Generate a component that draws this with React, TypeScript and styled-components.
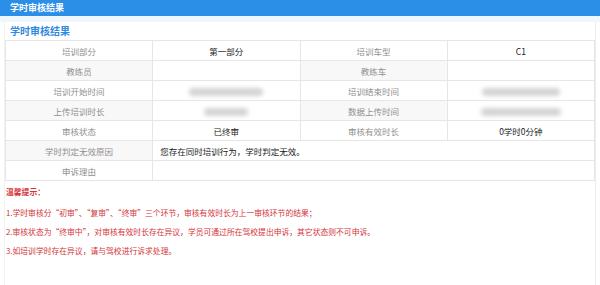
import React from "react";
import styled, { createGlobalStyle } from "styled-components";

const GlobalStyle = createGlobalStyle`
    html, body {
        margin: 0;
        padding: 0;
        background: #ffffff;
        font-family: "Noto Sans CJK SC", "Noto Sans", sans-serif;
    }
`;

const Page = styled.div`
    width: 600px;
    height: 285px;
    overflow: hidden;
    background: #fff;
`;

const TopBar = styled.div`
    height: 16px;
    background: #2b8fe8;
    color: #fff;
    font-size: 9px;
    font-weight: 700;
    line-height: 16px;
    padding-left: 10px;
`;

const Band = styled.div`
    height: 6px;
    background: #eef7fd;
`;

const Panel = styled.div`
    margin: 0 4px;
    border-right: 1px solid #ececec;
    border-left: 1px solid #f3f3f3;
    padding-bottom: 40px;
`;

const Title = styled.div`
    height: 18px;
    line-height: 18px;
    padding-left: 5px;
    color: #3189df;
    font-size: 10px;
    font-weight: 700;
`;

const Table = styled.table`
    width: 100%;
    border-collapse: collapse;
    table-layout: fixed;
    font-size: 8.5px;
`;

const Row = styled.tr<{ $shade?: boolean }>`
    height: 20px;
    background: ${p => (p.$shade ? "#f8f8f8" : "#fff")};
`;

const Label = styled.td`
    border: 1px solid #e6e6e6;
    color: #8f8f8f;
    text-align: center;
    padding: 0;
`;

const Value = styled.td<{ $left?: boolean }>`
    border: 1px solid #e6e6e6;
    color: #222;
    text-align: ${p => (p.$left ? "left" : "center")};
    padding: ${p => (p.$left ? "0 0 0 7px" : "0")};
    background: #fff;
`;

const Blur = styled.span`
    display: inline-block;
    height: 8px;
    border-radius: 4px;
    background: #d4d4d4;
    filter: blur(2px);
    vertical-align: middle;
`;

const Notes = styled.div`
    padding: 5px 1px 0;
    color: #d4343a;
    font-size: 7.8px;
`;

const NoteHead = styled.div`
    font-weight: 700;
    line-height: 11px;
    margin-bottom: 10px;
`;

const NoteLine = styled.div`
    line-height: 11px;
    margin-bottom: 8px;
`;

type Cell = { label: string; value?: string; blur?: number };

const rows: [Cell, Cell][] = [
    [{ label: "培训部分", value: "第一部分" }, { label: "培训车型", value: "C1" }],
    [{ label: "教练员" }, { label: "教练车" }],
    [{ label: "培训开始时间", blur: 74 }, { label: "培训结束时间", blur: 78 }],
    [{ label: "上传培训时长", blur: 44 }, { label: "数据上传时间", blur: 80 }],
    [{ label: "审核状态", value: "已终审" }, { label: "审核有效时长", value: "0学时0分钟" }],
];

const renderValue = (c: Cell) =>
    c.blur ? <Blur style={{ width: c.blur }} /> : c.value;

export default function App() {
    return (
        <Page>
            <GlobalStyle />
            <TopBar>学时审核结果</TopBar>
            <Band />
            <Panel>
                <Title>学时审核结果</Title>
                <Table>
                    <tbody>
                        {rows.map((r, i) => (
                            <Row key={i} $shade={i % 2 === 1}>
                                <Label>{r[0].label}</Label>
                                <Value>{renderValue(r[0])}</Value>
                                <Label>{r[1].label}</Label>
                                <Value>{renderValue(r[1])}</Value>
                            </Row>
                        ))}
                        <Row $shade>
                            <Label>学时判定无效原因</Label>
                            <Value colSpan={3} $left>
                                您存在同时培训行为，学时判定无效。
                            </Value>
                        </Row>
                        <Row>
                            <Label>申诉理由</Label>
                            <Value colSpan={3} />
                        </Row>
                    </tbody>
                </Table>
                <Notes>
                    <NoteHead>温馨提示：</NoteHead>
                    <NoteLine>1.学时审核分“初审”、“复审”、“终审”三个环节，审核有效时长为上一审核环节的结果；</NoteLine>
                    <NoteLine>2.审核状态为“终审中”，对审核有效时长存在异议，学员可通过所在驾校提出申诉，其它状态则不可申诉。</NoteLine>
                    <NoteLine>3.如培训学时存在异议，请与驾校进行诉求处理。</NoteLine>
                </Notes>
            </Panel>
        </Page>
    );
}
